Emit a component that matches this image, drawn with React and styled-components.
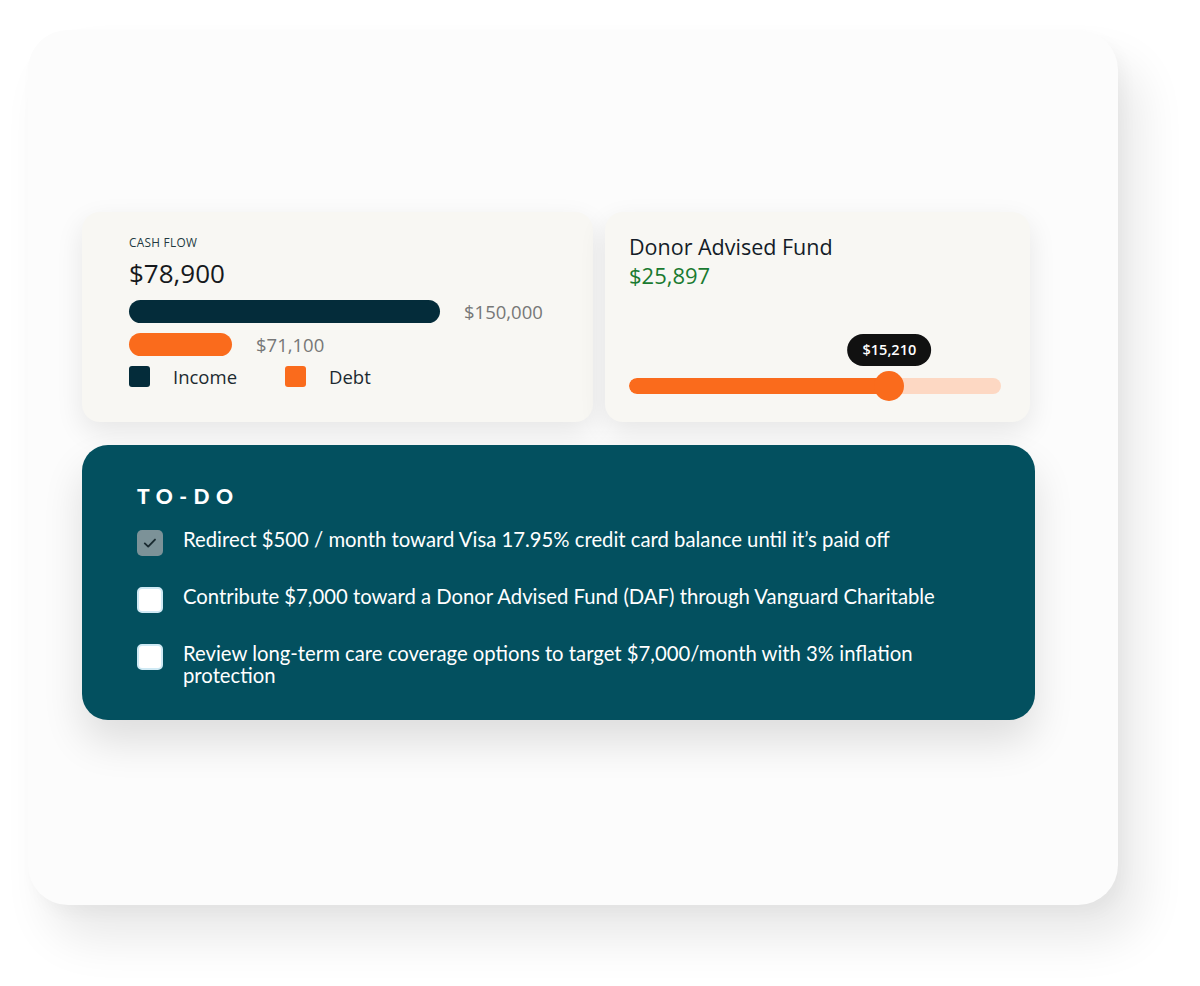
import styled, { createGlobalStyle } from 'styled-components';

const GlobalStyle = createGlobalStyle`
  html, body {
    margin: 0;
    padding: 0;
    background: #ffffff;
  }
  body {
    font-family: "Open Sans", Lato, sans-serif;
    -webkit-font-smoothing: antialiased;
  }
`;

const Page = styled.div`
  width: 1200px;
  height: 986px;
  padding: 30px 0 0 28px;
  box-sizing: border-box;
`;

const Board = styled.div`
  width: 1090px;
  height: 875px;
  box-sizing: border-box;
  padding: 182px 0 0 54px;
  background: #fcfcfc;
  border-radius: 40px;
  box-shadow: 22px 34px 48px rgba(0, 0, 0, 0.09), 6px 8px 16px rgba(0, 0, 0, 0.03);
  display: flex;
  flex-direction: column;
  gap: 23px;
`;

const TopRow = styled.div`
  display: flex;
  gap: 12px;
`;

const Card = styled.div`
  width: ${(p) => p.$width}px;
  height: 210px;
  box-sizing: border-box;
  background: #f8f7f3;
  border-radius: 18px;
  padding: ${(p) => p.$pad};
  box-shadow: 0 10px 28px rgba(0, 0, 0, 0.09);
  display: flex;
  flex-direction: column;
`;

const Eyebrow = styled.div`
  font-size: 11.8px;
  letter-spacing: 0.3px;
  color: #21393f;
  line-height: 14px;
`;

const Amount = styled.div`
  font-size: 26px;
  color: #16191c;
  line-height: 30px;
  margin-top: 9px;
`;

const BarRow = styled.div`
  display: flex;
  align-items: center;
  gap: 24px;
  height: 23px;
  margin-top: ${(p) => p.$mt}px;
`;

const Bar = styled.div`
  height: 23px;
  border-radius: 12px;
  background: ${(p) => p.$color};
`;

const BarValue = styled.span`
  font-size: 18.5px;
  color: #777777;
`;

const Legend = styled.div`
  display: flex;
  align-items: center;
  margin-top: 10px;
`;

const Swatch = styled.span`
  width: 21px;
  height: 21px;
  border-radius: 3px;
  background: ${(p) => p.$color};
  margin-right: 23px;
`;

const LegendLabel = styled.span`
  font-size: 18.5px;
  line-height: 21px;
  color: #1c2a30;
  width: ${(p) => p.$w}px;
`;

const FundTitle = styled.div`
  font-size: 21.5px;
  color: #141c28;
  line-height: 26px;
`;

const FundAmount = styled.div`
  font-size: 22px;
  color: #1a7a30;
  line-height: 26px;
  margin-top: 2px;
`;

const SliderWrap = styled.div`
  position: relative;
  margin-top: 90px;
  height: 16px;
  width: 372px;
`;

const Track = styled.div`
  height: 16px;
  border-radius: 8px;
  background: #fdd8c3;
  overflow: hidden;
`;

const Fill = styled.div`
  height: 100%;
  background: #fa6b1c;
  border-radius: 8px;
`;

const Thumb = styled.div`
  position: absolute;
  top: 50%;
  width: 30px;
  height: 30px;
  border-radius: 50%;
  background: #fa6b1c;
  transform: translate(-50%, -50%);
`;

const Bubble = styled.div`
  position: absolute;
  bottom: 28px;
  transform: translateX(-50%);
  background: #111111;
  color: #ffffff;
  font-size: 14.5px;
  font-weight: 600;
  padding: 0 15px;
  height: 32px;
  line-height: 32px;
  border-radius: 16px;
  white-space: nowrap;
`;

const TodoCard = styled.div`
  width: 953px;
  height: 275px;
  box-sizing: border-box;
  background: #03505f;
  border-radius: 26px;
  padding: 39px 0 0 55px;
  box-shadow: 0 22px 40px rgba(0, 0, 0, 0.12);
  color: #ffffff;
  font-family: Lato, "Open Sans", sans-serif;
`;

const TodoTitle = styled.h3`
  margin: 0 0 22px;
  font-size: 21px;
  font-weight: 900;
  letter-spacing: 6.5px;
  line-height: 24px;
`;

const TodoList = styled.ul`
  list-style: none;
  margin: 0;
  padding: 0;
  display: flex;
  flex-direction: column;
  gap: 31px;
`;

const TodoItem = styled.li`
  display: flex;
  align-items: flex-start;
  gap: 20px;
`;

const Box = styled.span`
  flex: none;
  width: 26px;
  height: 26px;
  box-sizing: border-box;
  border-radius: 5px;
  display: flex;
  align-items: center;
  justify-content: center;
  background: ${(p) => (p.$checked ? '#7c9298' : '#ffffff')};
  border: ${(p) => (p.$checked ? 'none' : '2px solid #cfe9f4')};
`;

const TodoText = styled.span`
  font-size: 20.3px;
  line-height: 22px;
  width: 760px;
  margin-top: -2px;
`;

const todos = [
  { text: 'Redirect $500 / month toward Visa 17.95% credit card balance until it’s paid off', done: true },
  { text: 'Contribute $7,000 toward a Donor Advised Fund (DAF) through Vanguard Charitable', done: false },
  { text: 'Review long-term care coverage options to target $7,000/month with 3% inflation protection', done: false },
];

const Check = () => (
  <svg width="16" height="16" viewBox="0 0 16 16" fill="none">
    <path d="M2.8 8.4l3.4 3.2L13 4.6" stroke="#1a2b31" strokeWidth="1.9" strokeLinecap="round" strokeLinejoin="round" />
  </svg>
);

export default function App() {
  const sliderPct = 70;
  return (
    <Page>
      <GlobalStyle />
      <Board>
        <TopRow>
          <Card $width={511} $pad="23px 0 0 47px">
            <Eyebrow>CASH FLOW</Eyebrow>
            <Amount>$78,900</Amount>
            <BarRow $mt={12}>
              <Bar $color="#042c3a" style={{ width: 311 }} />
              <BarValue>$150,000</BarValue>
            </BarRow>
            <BarRow $mt={10}>
              <Bar $color="#fa6b1c" style={{ width: 103 }} />
              <BarValue>$71,100</BarValue>
            </BarRow>
            <Legend>
              <Swatch $color="#042c3a" />
              <LegendLabel $w={112}>Income</LegendLabel>
              <Swatch $color="#fa6b1c" />
              <LegendLabel>Debt</LegendLabel>
            </Legend>
          </Card>
          <Card $width={425} $pad="22px 0 0 24px">
            <FundTitle>Donor Advised Fund</FundTitle>
            <FundAmount>$25,897</FundAmount>
            <SliderWrap>
              <Track>
                <Fill style={{ width: `${sliderPct}%` }} />
              </Track>
              <Thumb style={{ left: `${sliderPct}%` }} />
              <Bubble style={{ left: `${sliderPct}%` }}>$15,210</Bubble>
            </SliderWrap>
          </Card>
        </TopRow>
        <TodoCard>
          <TodoTitle>TO-DO</TodoTitle>
          <TodoList>
            {todos.map((t) => (
              <TodoItem key={t.text}>
                <Box $checked={t.done}>{t.done && <Check />}</Box>
                <TodoText>{t.text}</TodoText>
              </TodoItem>
            ))}
          </TodoList>
        </TodoCard>
      </Board>
    </Page>
  );
}
